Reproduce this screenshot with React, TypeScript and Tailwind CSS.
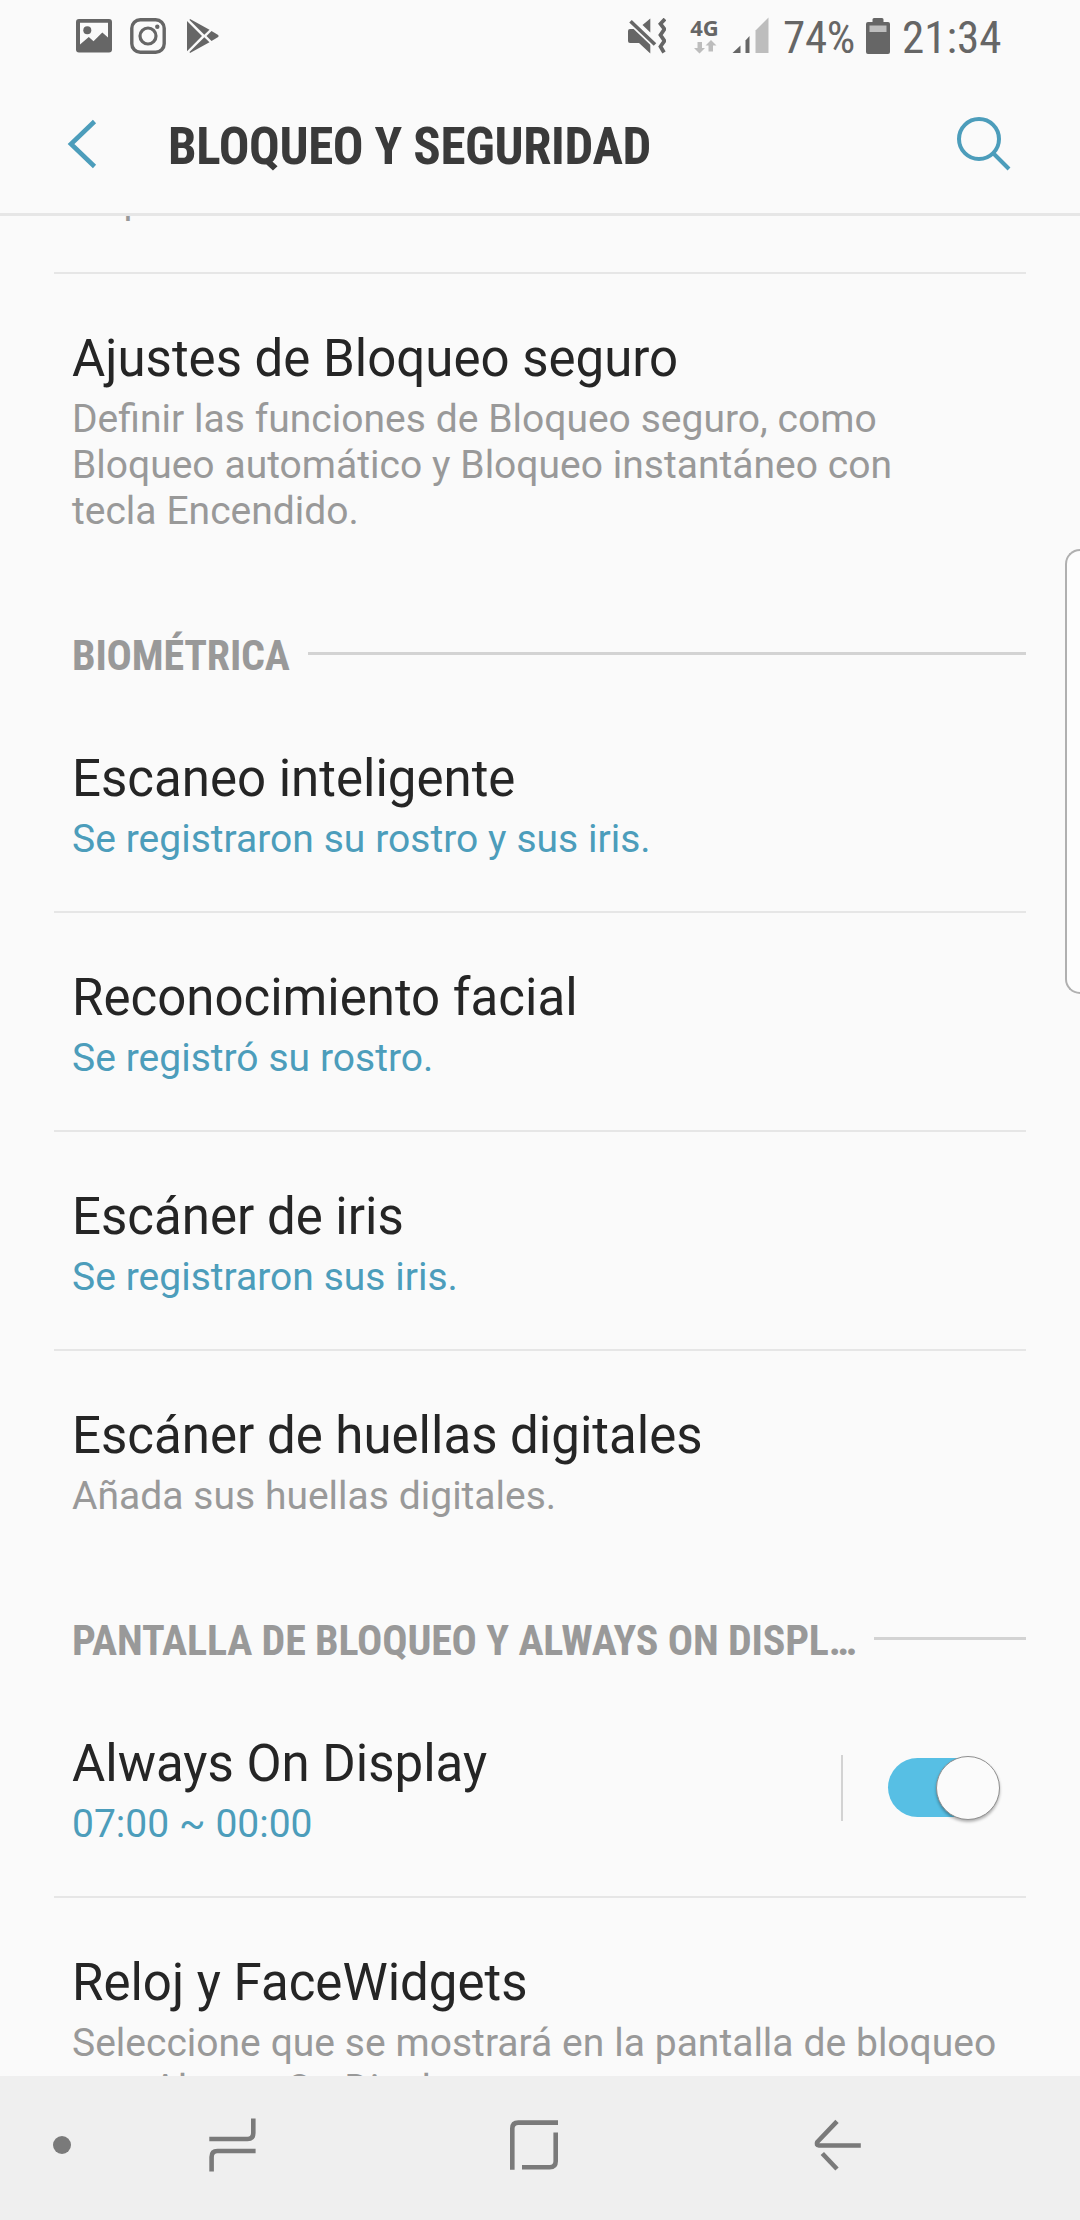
import type { ReactNode } from "react";

function StatusBar() {
  return (
    <div className="flex h-[72px] w-full shrink-0 items-start text-[#666666]">
      <svg className="ml-[76px] mt-[18px] h-9 w-9" viewBox="0 0 36 36" fill="currentColor">
        <path
          fillRule="evenodd"
          d="M3 1H33a3 3 0 0 1 3 3V31.500a3 3 0 0 1-3 3H3a3 3 0 0 1-3-3V4a3 3 0 0 1 3-3ZM4 4.700V26.500L12.800 19L17.500 23.200L26.300 14.500L32 19.500V4.700Z"
        />
        <circle cx="11.300" cy="12.200" r="4" />
      </svg>
      <svg className="ml-[18px] mt-[18px] h-9 w-9" viewBox="0 0 36 36" fill="none" stroke="currentColor">
        <rect x="1.800" y="1.800" width="32.400" height="32.400" rx="8.500" strokeWidth="3.400" />
        <circle cx="18" cy="18" r="8" strokeWidth="3.200" />
        <circle cx="27.300" cy="8.700" r="2.200" fill="currentColor" stroke="none" />
      </svg>
      <svg className="ml-[21px] mt-[18px] h-9 w-8" viewBox="0 0 32 36" fill="currentColor">
        <path d="M0 3L15 18L0 33.200Z" />
        <path d="M3 1L22.500 11.800L17.300 16.800L2.500 2Z" />
        <path d="M3 35L22.500 24.200L17.300 19.200L2.500 34Z" />
        <path d="M24.500 13L31.200 17Q32 18 31.200 19L24.500 23L19.500 18Z" />
      </svg>
      <div className="grow" />
      <svg className="mt-[18px] h-9 w-[38px] shrink-0" viewBox="0 0 38 36" fill="currentColor">
        <path d="M14.500 7L22.300 0.500V14.500Z" />
        <path d="M2 11H10L22.300 23V35.500L11 25H2Q0 25 0 23V13Q0 11 2 11Z" />
        <path d="M2.500 3.200L27 26.500" stroke="#fafafa" strokeWidth="7" />
        <path d="M2.500 3.200L27 26.500" stroke="currentColor" strokeWidth="3.600" />
        <path
          d="M37 1L32.500 5.800L36.500 11.200L32.500 17L36.500 22.800L32.500 28.500L36 34.500"
          fill="none"
          stroke="currentColor"
          strokeWidth="3.800"
        />
      </svg>
      <div className="ml-6 mt-[17px] flex w-[29px] shrink-0 flex-col items-center">
        <span className="font-['Open_Sans',sans-serif] text-[22px] leading-[20px] font-bold">4G</span>
        <svg className="mt-[3px] ml-[1px] h-[14px] w-[23px]" viewBox="0 0 23 14" fill="#bdbdbd">
          <path d="M3.500 2H8V8H11L5.500 13.500L0 8H3.500Z" />
          <path d="M14.500 11.500H19V5.500H22.500L17 0L11.500 5.500H14.500Z" />
        </svg>
      </div>
      <svg className="ml-[13px] mt-[17px] h-9 w-[37px] shrink-0" viewBox="0 0 37 36" fill="currentColor">
        <path d="M0.500 36L8.500 28.500V36Z" />
        <path d="M13.500 23.500L17.500 19V36H13.500Z" />
        <path d="M23.500 13.500L36.500 0.500V36H23.500Z" fill="#bdbdbd" />
      </svg>
      <span className="ml-[14px] mt-[11px] w-[71px] shrink-0 text-[45px] leading-[53px] tracking-[-0.3px] whitespace-nowrap [font-stretch:75%]">
        74%
      </span>
      <svg className="ml-[12px] mt-[18px] h-9 w-6 shrink-0" viewBox="0 0 24 36">
        <path
          d="M8 0H16Q17.500 0 17.500 1.500V4H22Q24 4 24 6V34Q24 36 22 36H2Q0 36 0 34V6Q0 4 2 4H6.500V1.500Q6.500 0 8 0Z"
          fill="#666666"
        />
        <path d="M3.500 7.500H20.500V14H3.500Z" fill="#bdbdbd" />
      </svg>
      <span className="ml-[12px] mt-[11px] mr-[78px] w-[100px] shrink-0 text-[45px] leading-[53px] whitespace-nowrap [font-stretch:75%]">
        21:34
      </span>
    </div>
  );
}

function Header() {
  return (
    <header className="flex h-[144px] w-full shrink-0 items-start border-b-[3px] border-[#e6e6e6]">
      <svg className="ml-[66px] mt-[46px] h-[52px] w-8" viewBox="0 0 32 52" fill="none" stroke="#4c9dbb" strokeWidth="4.600">
        <path d="M28.500 3.500L5 26L28.500 48.500" />
      </svg>
      <h1 className="ml-[70px] mt-[45px] text-[51px] leading-[60px] font-bold tracking-[-0.38px] whitespace-nowrap text-[#3a3a3a] [font-stretch:75%]">
        BLOQUEO Y SEGURIDAD
      </h1>
      <div className="grow" />
      <svg className="mt-[43px] mr-[69px] h-[56px] w-[56px]" viewBox="0 0 56 56" fill="none" stroke="#4c9dbb" strokeWidth="4">
        <circle cx="24" cy="24" r="20" />
        <path d="M38.500 38.500L54 54" />
      </svg>
    </header>
  );
}

interface RowProps {
  title: string;
  lines: string[];
  accent?: boolean;
  divider?: boolean;
  children?: ReactNode;
}

function Row({ title, lines, accent = false, divider = true, children }: RowProps) {
  return (
    <div className={divider ? "flex border-t-2 border-[#e6e6e6]" : "flex"}>
      <div className="grow pt-[55px] pb-[49px] pl-[18px]">
        <h3 className="text-[51px] leading-[60px] whitespace-nowrap text-[#252525]">{title}</h3>
        <div className={accent ? "mt-[7px] text-[#4c9dbb]" : "mt-[7px] text-[#999999]"}>
          {lines.map((line) => (
            <p key={line} className="text-[39px] leading-[46px] whitespace-nowrap [word-spacing:0.2px]">
              {line}
            </p>
          ))}
        </div>
      </div>
      {children}
    </div>
  );
}

function Section({ label }: { label: string }) {
  return (
    <div className="flex items-start pt-[48px] pb-[13px] pl-[18px]">
      <h2 className="text-[42px] leading-[50px] font-bold tracking-[-0.18px] whitespace-nowrap text-[#999999] [font-stretch:75%]">
        {label}
      </h2>
      <div className="mt-[21px] ml-[18px] h-[3px] grow bg-[#d3d3d3]" />
    </div>
  );
}

function Toggle() {
  return (
    <div className="flex shrink-0 items-center pr-[26px]">
      <div className="h-[66px] w-[2px] bg-[#d3d3d3]" />
      <div className="ml-[45px] flex h-[59px] w-[112px] items-center justify-end rounded-l-full bg-[linear-gradient(to_right,#57bfe4_80px,transparent_80px)]">
        <div className="h-[64px] w-[64px] shrink-0 rounded-full border border-[#8f8f8f] bg-[#fbfbfb] shadow-[0_2px_3px_rgba(0,0,0,0.3)]" />
      </div>
    </div>
  );
}

function NavBar() {
  return (
    <nav className="flex h-[144px] w-full shrink-0 items-start bg-[#efefef]">
      <div className="mt-[60px] ml-[53px] h-[18px] w-[18px] rounded-full bg-[#7a7a7a]" />
      <svg className="mt-[42px] ml-[138px] h-[54px] w-[47px]" viewBox="0 0 47 54" fill="none" stroke="#7a7a7a" strokeWidth="4.600">
        <path d="M0.300 21H38.500Q44.300 21 44.300 15V0.500" />
        <path d="M46.600 33H8.400Q2.600 33 2.600 39V53.500" />
      </svg>
      <svg className="mt-[44px] ml-[254px] h-[50px] w-[48px]" viewBox="0 0 48 50" fill="none" stroke="#7a7a7a" strokeWidth="4.600">
        <path d="M2.300 49.700V8.500Q2.300 2.600 8.300 2.600H48" />
        <path d="M12 47.200H39.700Q45.700 47.200 45.700 41.200V12.500" />
      </svg>
      <svg className="mt-[43px] ml-[256px] h-[52px] w-[48px]" viewBox="0 0 48 52" fill="none" stroke="#7a7a7a" strokeWidth="4.600">
        <path d="M46.800 26.500H5Q1.800 26.200 3.300 23L23 2.300" strokeLinejoin="round" />
        <path d="M8.300 34.500L23 50" />
      </svg>
    </nav>
  );
}

export default function App() {
  return (
    <div className="relative flex h-[2220px] w-[1080px] flex-col overflow-hidden bg-[#fafafa] font-[Roboto,sans-serif]">
      <StatusBar />
      <Header />
      <main className="h-[1860px] w-full shrink-0 overflow-hidden px-[54px]">
        <div className="-mt-[39px]">
          <p className="pb-[49px] pl-[18px] text-[39px] leading-[46px] text-[#999999]">dispositivo.</p>
          <Row
            title="Ajustes de Bloqueo seguro"
            lines={[
              "Definir las funciones de Bloqueo seguro, como",
              "Bloqueo automático y Bloqueo instantáneo con",
              "tecla Encendido.",
            ]}
          />
          <Section label="BIOMÉTRICA" />
          <Row title="Escaneo inteligente" lines={["Se registraron su rostro y sus iris."]} accent divider={false} />
          <Row title="Reconocimiento facial" lines={["Se registró su rostro."]} accent />
          <Row title="Escáner de iris" lines={["Se registraron sus iris."]} accent />
          <Row title="Escáner de huellas digitales" lines={["Añada sus huellas digitales."]} />
          <Section label="PANTALLA DE BLOQUEO Y ALWAYS ON DISPL…" />
          <Row title="Always On Display" lines={["07:00 ~ 00:00"]} accent divider={false}>
            <Toggle />
          </Row>
          <Row
            title="Reloj y FaceWidgets"
            lines={["Seleccione que se mostrará en la pantalla de bloqueo", "y en Always On Display."]}
          />
        </div>
      </main>
      <NavBar />
      {/* Edge panel handle floating over the list */}
      <div className="absolute top-[549px] right-0 h-[445px] w-[15px] rounded-l-[18px] border-2 border-r-0 border-[#b0b0b0] bg-[#fdfdfd]" />
    </div>
  );
}
